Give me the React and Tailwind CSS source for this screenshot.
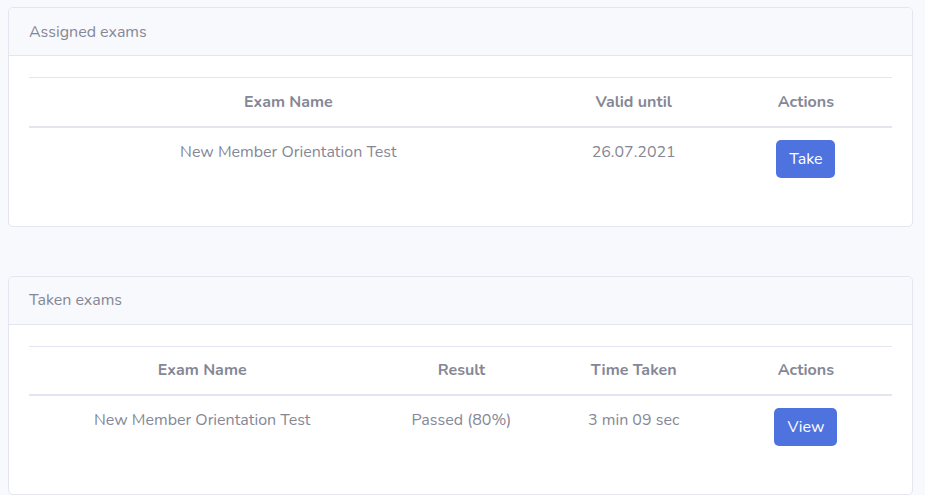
import React from 'react';

const font = { fontFamily: 'Nunito, Lato, "Open Sans", sans-serif' };

function ExamCard({ title, columns, rows }) {
  return (
    <div className="bg-white border border-[#e3e6f0] rounded-[5px] overflow-hidden">
      <div className="bg-[#f8f9fc] border-b border-[#e3e6f0] px-5 h-[48px] flex items-center text-[16px] text-[#858796]">
        {title}
      </div>
      <div className="px-5 pt-[21px] pb-5">
        <table className="w-full border-collapse mb-4 text-[16px] text-[#858796] table-fixed">
          <thead>
            <tr className="border-t border-[#e3e6f0]">
              {columns.map((c) => (
                <th
                  key={c.label}
                  className={`${c.w} h-[49px] border-b-2 border-[#e3e6f0] font-bold text-center align-middle`}
                >
                  {c.label}
                </th>
              ))}
            </tr>
          </thead>
          <tbody>
            {rows.map((r, idx) => (
              <tr key={idx}>
                {r.map((cell, i) => (
                  <td key={i} className="px-3 py-3 text-center align-top leading-6">
                    {cell}
                  </td>
                ))}
              </tr>
            ))}
          </tbody>
        </table>
      </div>
    </div>
  );
}

function Btn({ children, w }) {
  return (
    <button className={`${w} h-[38px] rounded-[5px] bg-[#4e73df] text-white text-[16px]`}>
      {children}
    </button>
  );
}

export default function App() {
  return (
    <div className="min-h-[495px] bg-[#f8f9fc] pl-2 pr-[12px] pt-[7px]" style={font}>
      <div className="mb-[49px]">
        <ExamCard
          title="Assigned exams"
          columns={[
            { label: 'Exam Name', w: 'w-[518px]' },
            { label: 'Valid until', w: 'w-[172px]' },
            { label: 'Actions', w: 'w-[172px]' },
          ]}
          rows={[['New Member Orientation Test', '26.07.2021', <Btn w="w-[59px]">Take</Btn>]]}
        />
      </div>
      <ExamCard
        title="Taken exams"
        columns={[
          { label: 'Exam Name', w: 'w-[346px]' },
          { label: 'Result', w: 'w-[172px]' },
          { label: 'Time Taken', w: 'w-[172px]' },
          { label: 'Actions', w: 'w-[172px]' },
        ]}
        rows={[[
          'New Member Orientation Test',
          'Passed (80%)',
          '3 min 09 sec',
          <Btn w="w-[63px]">View</Btn>,
        ]]}
      />
    </div>
  );
}
